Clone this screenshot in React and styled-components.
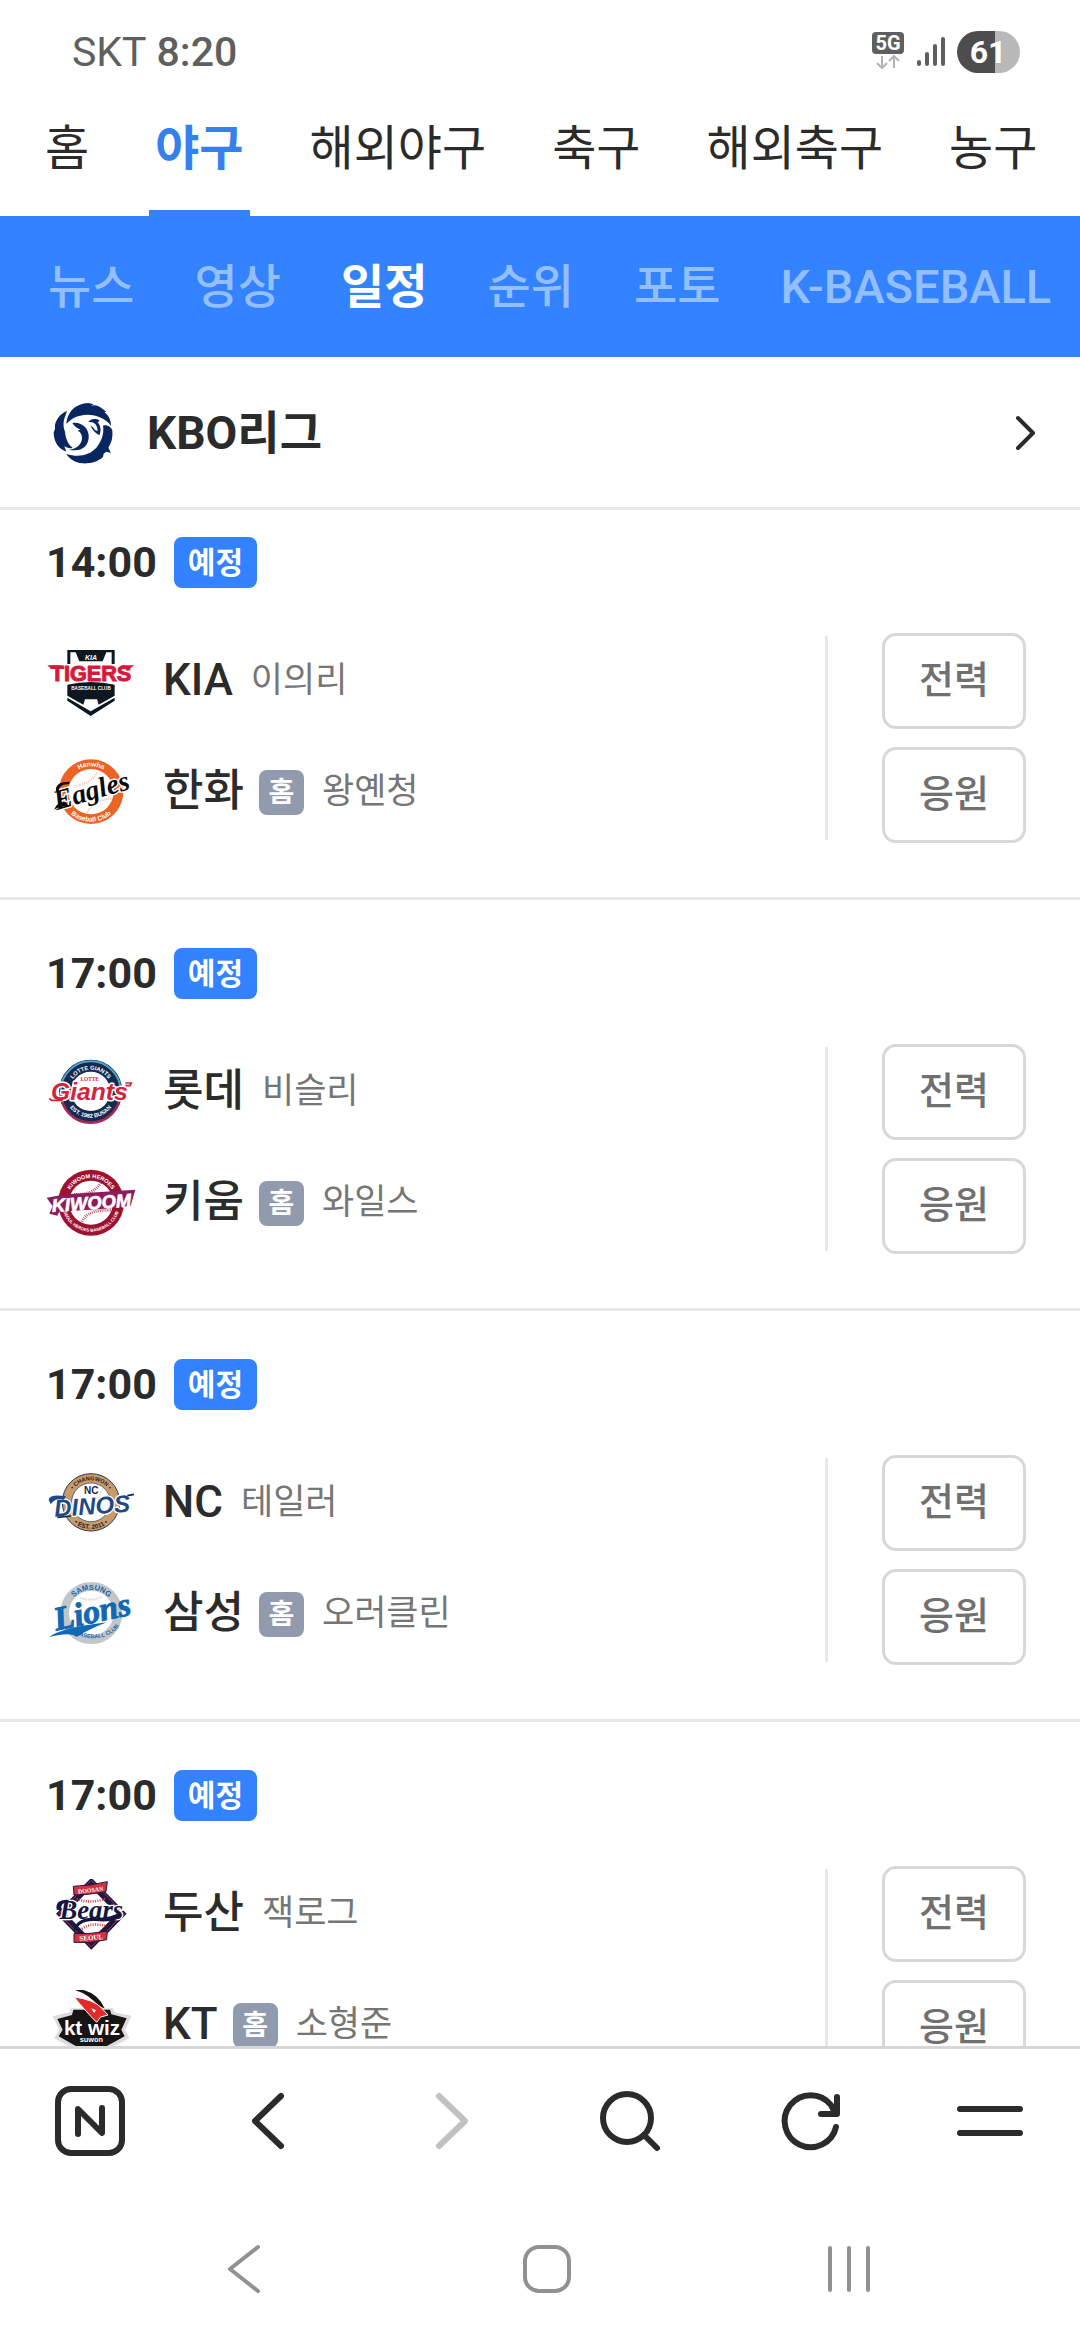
import React, {useId} from 'react';
import styled, {createGlobalStyle} from 'styled-components'

const GlobalStyle = createGlobalStyle`
  * {
    box-sizing: border-box;
  }
  body {
    margin: 0;
    background: #fff;
    color: #2b2b2b;
    font-family: Roboto, "Noto Sans CJK KR", sans-serif;
  }
  a {
    color: inherit;
    text-decoration: none;
  }
  button {
    font-family: inherit;
    cursor: pointer;
  }
  svg {
    display: block;
    flex: none;
  }
`;

const Screen = styled.div`
  display: flex;
  flex-direction: column;
  height: 100vh;
  overflow: hidden;
`;

const StatusBar = styled.div`
  display: flex;
  align-items: center;
  justify-content: space-between;
  height: 104px;
  padding: 0 60px 0 72px;
  color: #5f5f5f;
  font-size: 41px;
  line-height: 48px;
  b {
    font-weight: 500;
    margin-left: 10px;
  }
`;
const StatusIcons = styled.div`
  display: flex;
  align-items: center;
  gap: 12px;
`;

const Tabs = styled.nav`
  display: flex;
  flex: none;
  gap: 54px;
  height: 112px;
  padding: 0 39px;
  white-space: nowrap;
`;
const Tab = styled.a`
  padding: 10px 6px 0;
  font-size: 48px;
  line-height: 70px;
  font-weight: ${({$active}) => $active ? 700 : 400};
  && {
    color: ${({$active}) => $active ? '#3380ee' : '#2b2b2b'};
  }
  border-bottom: 6px solid ${({$active}) => $active ? '#3382ff' : 'transparent'};
`;

const SubTabs = styled.nav`
  display: flex;
  flex: none;
  align-items: center;
  gap: 60px;
  height: 141px;
  padding: 0 48px;
  background: #3382ff;
  white-space: nowrap;
`;
const SubTab = styled.a`
  font-size: 47px;
  line-height: 68px;
  font-weight: ${({$active}) => $active ? 700 : 500};
  && {
    color: ${({$active}) => $active ? '#fff' : '#94bfff'};
  }
`;

const League = styled.a`
  display: flex;
  flex: none;
  align-items: center;
  gap: 33px;
  height: 153px;
  padding: 2px 38px 0 52px;
  border-bottom: 3px solid #e8e8e8;
`;
const LeagueName = styled.h1`
  flex: 1;
  margin: 0;
  font-size: 46px;
  line-height: 68px;
  font-weight: 700;
`;

const Games = styled.ul`
  flex: 1;
  min-height: 0;
  margin: 0;
  padding: 0;
  overflow: hidden;
  list-style: none;
`;
const GameItem = styled.li`
  padding: 48px 54px 54px 46px;
  border-bottom: 3px solid #e8e8e8;
  &:first-child {
    padding-top: 27px;
  }
`;
const GameTime = styled.div`
  display: flex;
  align-items: center;
  gap: 17px;
  height: 51px;
  margin-bottom: 45px;
  font-size: 43px;
  line-height: 51px;
  font-weight: 700;
`;
const Status = styled.span`
  padding: 0 14px;
  border-radius: 8px;
  background: #3382ff;
  color: #fff;
  font-size: 30px;
  line-height: 51px;
`;
const GameBody = styled.div`
  display: flex;
  height: 210px;
`;
const Teams = styled.div`
  display: flex;
  flex: 1;
  flex-direction: column;
  gap: 36px;
  margin: 3px 0;
  padding-top: 8px;
  border-right: 3px solid #e8e8e8;
`;
const TeamRow = styled.div`
  display: flex;
  align-items: center;
  height: 75px;
`;
const TeamName = styled.strong`
  margin-left: 27px;
  padding-bottom: 4px;
  font-size: 44px;
  line-height: 64px;
  font-weight: 500;
`;
const HomeMark = styled.span`
  width: 45px;
  margin-left: 15px;
  border-radius: 8px;
  background: #929bad;
  color: #fff;
  font-size: 28px;
  line-height: 45px;
  font-weight: 700;
  text-align: center;
`;
const Pitcher = styled.span`
  margin-left: 18px;
  padding-bottom: 2px;
  color: #767676;
  font-size: 35px;
  line-height: 52px;
`;
const Actions = styled.div`
  display: flex;
  flex-direction: column;
  gap: 18px;
  margin-left: 54px;
`;
const Action = styled.button`
  width: 144px;
  height: 96px;
  padding: 0 0 9px;
  border: 3px solid #d8d8d8;
  border-radius: 14px;
  background: #fff;
  color: #707070;
  font-size: 38px;
  font-weight: 500;
`;

const Toolbar = styled.div`
  display: grid;
  grid-template-columns: repeat(6, 1fr);
  flex: none;
  height: 152px;
  padding-bottom: 5px;
  border-top: 3px solid #d6d6d6;
`;
const SystemNav = styled.div`
  display: grid;
  grid-template-columns: repeat(3, 1fr);
  flex: none;
  height: 142px;
  padding: 0 80px 0 94px;
`;
const IconButton = styled.button`
  display: flex;
  align-items: center;
  justify-content: center;
  padding: 0;
  border: 0;
  background: none;
  color: ${({$dim}) => $dim || '#2b2b2b'};
`;

const Icon = ({size = 72, width = 6, children}) => (
  <svg width={size} height={size} viewBox={`0 0 ${size} ${size}`} fill="none" stroke="currentColor"
    strokeWidth={width} strokeLinecap="round" strokeLinejoin="round" aria-hidden="true">
    {children}
  </svg>
);

const SANS = '"Liberation Sans", sans-serif';
const SERIF = '"Liberation Serif", serif';

const Logo = ({top, children}) => (
  <svg width="90" height="72" viewBox={`24 ${top} 270 216`} aria-hidden="true">{children}</svg>
);

// small lettering that runs round a badge
const Arc = ({d, children, ...rest}) => {
  const id = useId();
  return <>
    <path id={id} d={d} fill="none" />
    <text fontFamily={SANS} fontWeight="700" textAnchor="middle" {...rest}>
      <textPath href={`#${id}`} startOffset="50%">{children}</textPath>
    </text>
  </>
};

const Tigers = () => <Logo top={50}>
  <path d="M88 62H230V104H221V69H205L194 96H124L113 69H97V104H88Z" fill="#0c1720" />
  <text x="159" y="91" textAnchor="middle" fontFamily={SANS} fontWeight="700" fontStyle="italic" fontSize="21" fill="#fff">KIA</text>
  <path d="M88 166Q159 150 230 166V199L182 226 177 210H141L136 226 88 199Z" fill="#0c1720" />
  <path d="M88 205L158 246 230 205V214L158 260 88 214Z" fill="#0c1720" />
  <text x="159" y="156" textAnchor="middle" fontFamily={SANS} fontWeight="700" fontSize="65" fill="#d9193a" stroke="#d9193a" strokeWidth="3">TIGERS</text>
  <path d="M28 108H70V119H40ZM289 108H250V119H274Z" fill="#d9193a" />
  <text x="159" y="183" textAnchor="middle" fontFamily={SANS} fontWeight="700" fontSize="14" fill="#fff">BASEBALL CLUB</text>
</Logo>;

const Eagles = () => <Logo top={382}>
  <circle cx="159" cy="486" r="97" fill="#ec6425" />
  <circle cx="159" cy="486" r="68" fill="#fff" />
  <path d="M116 468Q158 462 178 428M148 548Q166 513 222 505" fill="none" stroke="#eba37c" strokeWidth="6" strokeDasharray="2 4" />
  <Arc d="M83 486A76 76 0 0 1 235 486" fontSize="20" fill="#fff">Hanwha</Arc>
  <Arc d="M69 486A90 90 0 0 0 249 486" fontSize="20" fill="#fff">Baseball Club</Arc>
  <text x="162" y="510" textAnchor="middle" transform="rotate(-16 162 490)" fontFamily={SERIF} fontWeight="700" fontStyle="italic" fontSize="84" fill="#0b0b0d" stroke="#fff" strokeWidth="8" paintOrder="stroke">Eagles</text>
  <path d="M48 540Q60 512 84 518L92 530Q66 530 48 540ZM54 484Q50 456 96 456L92 464Q64 462 62 484Z" fill="#0b0b0d" />
</Logo>;

const Giants = () => <Logo top={52}>
  <circle cx="158" cy="155" r="95" fill="#16294f" />
  <path d="M68 155A90 90 0 0 1 248 155" fill="none" stroke="#4fa3cf" strokeWidth="6" />
  <path d="M69 160A89 89 0 0 0 247 160" fill="none" stroke="#a22a58" strokeWidth="8" />
  <circle cx="158" cy="155" r="59" fill="#fff" />
  <Arc d="M93 155A65 65 0 0 1 223 155" fontSize="17" fill="#fff">LOTTE GIANTS</Arc>
  <Arc d="M79 155A79 79 0 0 0 237 155" fontSize="17" fill="#fff">EST. 1982 BUSAN</Arc>
  <text x="155" y="125" textAnchor="middle" fontFamily={SERIF} fontWeight="700" fontSize="16" fill="#d3233d">LOTTE</text>
  <text x="154" y="181" textAnchor="middle" fontFamily={SANS} fontWeight="700" fontStyle="italic" fontSize="74" fill="#d3233d" stroke="#fff" strokeWidth="9" strokeLinejoin="round" paintOrder="stroke">Giants</text>
  <path d="M34 176L40 182H74M262 130H280L276 138H262" fill="none" stroke="#d3233d" strokeWidth="5" />
</Logo>;

const Kiwoom = () => <Logo top={385}>
  <circle cx="159" cy="489" r="99" fill="#9c1230" />
  <circle cx="159" cy="489" r="66" fill="#fff" />
  <path d="M108 464Q164 468 188 430M132 546Q148 508 220 512" fill="none" stroke="#9c1230" strokeWidth="9" strokeDasharray="2 4" />
  <Arc d="M85 489A74 74 0 0 1 233 489" fontSize="17" fill="#fff">KIWOOM HEROES</Arc>
  <Arc d="M72 489A87 87 0 0 0 246 489" fontSize="13" fill="#fff">SEOUL HEROES BASEBALL CLUB</Arc>
  <path d="M26 474L84 464 292 450 278 498 222 506 64 516 58 528 34 522 44 500Z" fill="#8c1c5c" />
  <text x="160" y="509" textAnchor="middle" transform="rotate(-4 160 490)" fontFamily={SANS} fontWeight="700" fontStyle="italic" fontSize="55" fill="#fff" stroke="#fff" strokeWidth="2">KIWOOM</text>
</Logo>;

const Dinos = () => <Logo top={55}>
  <circle cx="159" cy="158" r="86" fill="#c99a6c" stroke="#28364f" strokeWidth="3" />
  <circle cx="159" cy="158" r="58" fill="#fff" stroke="#28364f" strokeWidth="2" />
  <path d="M196 116Q166 160 192 206" fill="none" stroke="#c9c9c9" strokeWidth="4" strokeDasharray="2 3" />
  <Arc d="M93 158A66 66 0 0 1 225 158" fontSize="17" fill="#28221c">• CHANGWON •</Arc>
  <Arc d="M79 158A80 80 0 0 0 239 158" fontSize="19" fill="#28221c">• EST. 2011 •</Arc>
  <text x="160" y="134" textAnchor="middle" fontFamily={SANS} fontWeight="700" fontSize="30" fill="#14284f">NC</text>
  <text x="162" y="194" textAnchor="middle" transform="rotate(-4 158 165)" fontFamily={SANS} fontWeight="700" fontStyle="italic" fontSize="72" fill="#1f4a86" stroke="#fff" strokeWidth="8" strokeLinejoin="round" paintOrder="stroke">DINOS</text>
  <path d="M32 150Q36 132 84 140L78 150Q50 144 38 164Z" fill="#1f4a86" />
  <path d="M58 203L100 199M268 138L288 134" fill="none" stroke="#14284f" strokeWidth="5" />
</Logo>;

const Lions = () => <Logo top={388}>
  <circle cx="160" cy="490" r="80" fill="#fff" stroke="#c3c6c9" strokeWidth="26" />
  <path d="M126 444Q160 458 194 440" fill="none" stroke="#c3c6c9" strokeWidth="6" strokeDasharray="2 3" />
  <Arc d="M90 490A70 70 0 0 1 230 490" fontSize="23" fill="#1a67ae">SAMSUNG</Arc>
  <Arc d="M74 504A90 76 0 0 0 256 470" fontSize="17" fill="#1a67ae">BASEBALL CLUB</Arc>
  <text x="164" y="520" textAnchor="middle" transform="rotate(-12 160 495)" fontFamily={SERIF} fontWeight="700" fontStyle="italic" fontSize="100" fill="#1268b3" stroke="#1268b3" strokeWidth="3">Lions</text>
  <path d="M34 562Q70 534 206 518Q150 540 116 562Q100 546 34 562Z" fill="#1268b3" />
</Logo>;

const Bears = () => <Logo top={58}>
  <path d="M160 54L266 162 160 270 54 162Z" fill="#1c1842" />
  <path d="M160 62L258 162 160 262 62 162Z" fill="none" stroke="#c8243c" strokeWidth="3" />
  <path d="M160 84L236 162 160 240 84 162Z" fill="#fff" />
  <path d="M116 118Q160 134 204 116M132 208Q160 186 206 200" fill="none" stroke="#cf4654" strokeWidth="8" strokeDasharray="3 4" />
  <path d="M106 80Q160 78 208 66L204 96Q150 106 108 106ZM108 222Q160 224 208 214L206 240Q160 252 108 248Z" fill="#d6303f" stroke="#1c1842" strokeWidth="3" />
  <text x="158" y="98" textAnchor="middle" transform="rotate(-7 158 92)" fontFamily={SERIF} fontWeight="700" fontSize="18" fill="#fff">DOOSAN</text>
  <text x="160" y="241" textAnchor="middle" transform="rotate(-4 160 236)" fontFamily={SERIF} fontWeight="700" fontSize="21" fill="#fff">SEOUL</text>
  <text x="160" y="178" textAnchor="middle" fontFamily={SERIF} fontWeight="700" fontStyle="italic" fontSize="80" fill="#16153f" stroke="#fff" strokeWidth="8" paintOrder="stroke">Bears</text>
  <path d="M252 166Q240 190 170 184Q120 182 108 222Q104 178 160 174Q220 176 240 160Z" fill="#16153f" />
  <path d="M56 150Q50 118 92 120L90 128Q66 128 70 152Z" fill="#16153f" />
</Logo>;

const Wiz = () => <Logo top={391}>
  <path d="M44 470L94 458 98 446 224 446 230 458 280 468 262 510 274 536 214 566 160 608 106 566 48 536 64 510Z" fill="#dcdcdc" />
  <path d="M58 478L102 466 106 450 216 450 220 464 266 476 250 510 260 530 208 558 160 596 112 558 62 530 74 510Z" fill="#161415" />
  <path d="M92 386Q172 384 200 446L182 440Q150 398 92 386Z" fill="#161415" />
  <path d="M108 412Q168 420 190 444L210 466 188 472 176 488Q146 458 108 412Z" fill="#e02a2b" stroke="#fff" strokeWidth="3" />
  <path d="M160 446L174 452 168 460Z" fill="#fff" />
  <text x="162" y="525" textAnchor="middle" fontFamily={SANS} fontWeight="700" fontSize="62" fill="#fff">kt wiz</text>
  <text x="160" y="548" textAnchor="middle" fontFamily={SANS} fontWeight="700" fontSize="22" fill="#fff">suwon</text>
</Logo>;

const KboLogo = () => (
  <svg width="62" height="62" viewBox="37 31 186 186" fill="#08265f" aria-hidden="true">
    <path d="M80 97C82 62 106 36 146 34L162 38 154 42C166 38 176 42 184 48L200 60 194 61C208 72 214 86 214 103C196 76 156 64 122 72C102 76 90 86 80 97Z" />
    <path d="M82 58L78 70C70 88 70 104 76 120C78 142 86 158 99 168C90 172 82 168 74 164L80 180C56 172 42 150 42 122L46 112 46 100C50 82 62 66 82 58Z" />
    <path d="M80 187C116 198 150 192 172 166C186 146 194 126 190 102C202 98 214 106 218 116C220 136 216 154 206 168L214 184 200 180 192 186 190 196C172 212 150 216 128 215C106 213 90 202 80 187Z" />
    <path d="M98 94C128 90 150 112 147 140C144 166 124 182 88 174C112 172 126 158 127 140C127 128 122 120 114 118L122 113C112 110 104 104 98 94Z" />
    <path d="M146 91C152 82 168 79 180 87L174 92C184 104 185 118 179 131C166 124 156 114 153 101L162 109C164 115 169 118 174 117C174 106 168 95 158 92Z" />
  </svg>
);

const tabs = ['홈', '야구', '해외야구', '축구', '해외축구', '농구'];
const subTabs = ['뉴스', '영상', '일정', '순위', '포토', 'K-BASEBALL'];

const games = [
  {
    time: '14:00',
    away: {name: 'KIA', pitcher: '이의리', logo: Tigers},
    home: {name: '한화', pitcher: '왕옌청', logo: Eagles},
  },
  {
    time: '17:00',
    away: {name: '롯데', pitcher: '비슬리', logo: Giants},
    home: {name: '키움', pitcher: '와일스', logo: Kiwoom},
  },
  {
    time: '17:00',
    away: {name: 'NC', pitcher: '테일러', logo: Dinos},
    home: {name: '삼성', pitcher: '오러클린', logo: Lions},
  },
  {
    time: '17:00',
    away: {name: '두산', pitcher: '잭로그', logo: Bears},
    home: {name: 'KT', pitcher: '소형준', logo: Wiz},
  },
];

const Team = ({name, pitcher, logo: TeamLogo, home}) => (
  <TeamRow>
    <TeamLogo />
    <TeamName>{name}</TeamName>
    {home && <HomeMark>홈</HomeMark>}
    <Pitcher>{pitcher}</Pitcher>
  </TeamRow>
);

const Game = ({time, away, home}) => (
  <GameItem>
    <GameTime>
      <time>{time}</time>
      <Status>예정</Status>
    </GameTime>
    <GameBody>
      <Teams>
        <Team {...away} />
        <Team {...home} home />
      </Teams>
      <Actions>
        <Action>전력</Action>
        <Action>응원</Action>
      </Actions>
    </GameBody>
  </GameItem>
);

const App = () => {
  return <Screen>
    <GlobalStyle />
    <StatusBar>
      <div>SKT<b>8:20</b></div>
      <StatusIcons>
        <svg width="34" height="42" viewBox="0 0 34 42" aria-hidden="true">
          <rect x="1" y="1" width="32" height="22" rx="4" fill="#5f5f5f" />
          <text x="17" y="19" textAnchor="middle" fontFamily="Roboto, sans-serif" fontWeight="700" fontSize="20" fill="#fff">5G</text>
          <path d="M11 25V36M6 32L11 37 16 32M23 37V25M18 30L23 25 28 30" fill="none" stroke="#b4b4b4" strokeWidth="2" />
        </svg>
        <svg width="28" height="42" viewBox="0 0 28 42" fill="none" stroke="#5f5f5f" strokeWidth="4" strokeLinecap="round" aria-hidden="true">
          <path d="M2 31V33M10 23V33M18 15V33M26 8V33" />
        </svg>
        <svg width="63" height="42" viewBox="0 0 63 42" aria-hidden="true">
          <path d="M21 0H38V42H21A21 21 0 0 1 21 0Z" fill="#4d4d4d" />
          <path d="M38 0H42A21 21 0 0 1 42 42H38Z" fill="#b9b9b9" />
          <text x="31" y="32" textAnchor="middle" fontFamily="Roboto, sans-serif" fontWeight="700" fontSize="32" fill="#fff">61</text>
        </svg>
      </StatusIcons>
    </StatusBar>
    <Tabs>
      {tabs.map(tab => <Tab key={tab} href="#" $active={tab === '야구'}>{tab}</Tab>)}
    </Tabs>
    <SubTabs>
      {subTabs.map(tab => <SubTab key={tab} href="#" $active={tab === '일정'}>{tab}</SubTab>)}
    </SubTabs>
    <League href="#">
      <KboLogo />
      <LeagueName>KBO리그</LeagueName>
      <Icon size={36} width={4}><path d="M12 3L27 18 12 33" /></Icon>
    </League>
    <Games>
      {games.map(game => <Game key={game.home.name} {...game} />)}
    </Games>
    <Toolbar>
      <IconButton aria-label="네이버 홈">
        <Icon>
          <rect x="4" y="4" width="64" height="64" rx="13" />
          <path d="M24 49V24L48 48V23" strokeWidth="6" />
        </Icon>
      </IconButton>
      <IconButton aria-label="뒤로">
        <Icon><path d="M47 11L21 36 47 61" /></Icon>
      </IconButton>
      <IconButton aria-label="앞으로" $dim="#c1c1c1">
        <Icon><path d="M25 11L51 36 25 61" /></Icon>
      </IconButton>
      <IconButton aria-label="검색">
        <Icon><circle cx="33" cy="33" r="24" /><path d="M50 50L63 63" /></Icon>
      </IconButton>
      <IconButton aria-label="새로고침">
        <Icon><path d="M62 42A26 26 0 1 1 57 20L61 28M63 12V29H47" /></Icon>
      </IconButton>
      <IconButton aria-label="메뉴">
        <Icon><path d="M6 24H66M6 48H66" /></Icon>
      </IconButton>
    </Toolbar>
    <SystemNav>
      <IconButton aria-label="이전" $dim="#919191">
        <Icon size={54} width={4}><path d="M40 5L12 27 40 49" /></Icon>
      </IconButton>
      <IconButton aria-label="홈 화면" $dim="#919191">
        <Icon size={54} width={4}><rect x="5" y="5" width="44" height="44" rx="14" /></Icon>
      </IconButton>
      <IconButton aria-label="최근 앱" $dim="#919191">
        <Icon size={54} width={4}><path d="M8 6V48M27 6V48M46 6V48" /></Icon>
      </IconButton>
    </SystemNav>
  </Screen>
};

export default App;
